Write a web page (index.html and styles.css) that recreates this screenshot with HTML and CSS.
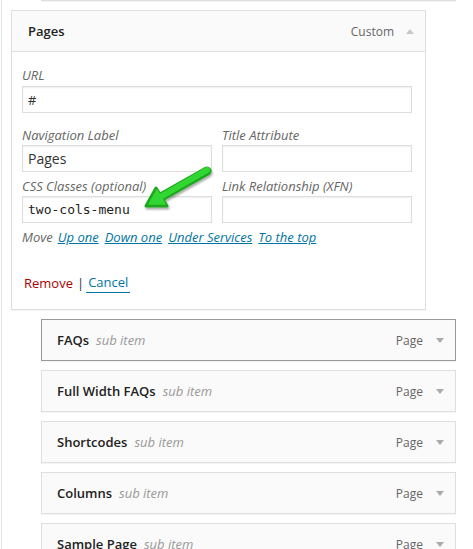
FILE: index.html
```html
<!DOCTYPE html>
<html>
<head>
<meta charset="utf-8">
<link rel="stylesheet" href="styles.css">
</head>
<body>
<div class="page">
  <div class="prev-edge"></div>

  <div class="card">
    <div class="card-head">
      <span class="item-title">Pages</span>
      <span class="item-controls"><span class="item-type">Custom</span><span class="tri tri-up"></span></span>
    </div>
    <div class="card-body">
      <div class="field">
        <label class="lbl">URL</label>
        <div class="input"><span class="val">#</span></div>
      </div>
      <div class="row">
        <div class="field">
          <label class="lbl">Navigation Label</label>
          <div class="input"><span class="val big">Pages</span></div>
        </div>
        <div class="field">
          <label class="lbl">Title Attribute</label>
          <div class="input"></div>
        </div>
      </div>
      <div class="row row2">
        <div class="field">
          <label class="lbl">CSS Classes (optional)</label>
          <div class="input"><span class="val mono">two-cols-menu</span></div>
        </div>
        <div class="field">
          <label class="lbl">Link Relationship (XFN)</label>
          <div class="input"></div>
        </div>
      </div>
      <div class="move">
        <span class="move-lbl">Move</span>
        <a class="lnk">Up one</a>
        <a class="lnk">Down one</a>
        <a class="lnk">Under Services</a>
        <a class="lnk">To the top</a>
      </div>
      <div class="actions">
        <a class="remove">Remove</a><span class="sep">|</span><a class="cancel">Cancel</a>
      </div>
    </div>
  </div>

  <div class="item active">
    <span class="item-name"><span class="item-title">FAQs</span><span class="sub">sub item</span></span>
    <span class="item-controls"><span class="item-type">Page</span><span class="tri tri-down"></span></span>
  </div>
  <div class="item">
    <span class="item-name"><span class="item-title">Full Width FAQs</span><span class="sub">sub item</span></span>
    <span class="item-controls"><span class="item-type">Page</span><span class="tri tri-down"></span></span>
  </div>
  <div class="item">
    <span class="item-name"><span class="item-title">Shortcodes</span><span class="sub">sub item</span></span>
    <span class="item-controls"><span class="item-type">Page</span><span class="tri tri-down"></span></span>
  </div>
  <div class="item">
    <span class="item-name"><span class="item-title">Columns</span><span class="sub">sub item</span></span>
    <span class="item-controls"><span class="item-type">Page</span><span class="tri tri-down"></span></span>
  </div>
  <div class="item">
    <span class="item-name"><span class="item-title">Sample Page</span><span class="sub">sub item</span></span>
    <span class="item-controls"><span class="item-type">Page</span><span class="tri tri-down"></span></span>
  </div>
</div>

<svg class="arrow" width="473" height="549" viewBox="0 0 473 549">
  <defs>
    <filter id="sh" x="-20%" y="-20%" width="140%" height="140%">
      <feGaussianBlur in="SourceAlpha" stdDeviation="1.2"/>
      <feOffset dx="0.5" dy="1.5" result="b"/>
      <feComponentTransfer><feFuncA type="linear" slope="0.35"/></feComponentTransfer>
      <feMerge><feMergeNode/><feMergeNode in="SourceGraphic"/></feMerge>
    </filter>
  </defs>
  <g filter="url(#sh)">
    <line x1="207" y1="171" x2="161" y2="197" stroke="#1fa81f" stroke-width="9" stroke-linecap="round"/>
    <polygon points="146,206 156,188 167,206" fill="#1fa81f" stroke="#1fa81f" stroke-width="3" stroke-linejoin="round"/>
    <line x1="207" y1="170" x2="162" y2="196" stroke="#33d633" stroke-width="6" stroke-linecap="round"/>
    <polygon points="149,204 157,190 165,204" fill="#33d633" stroke="#33d633" stroke-width="1.5" stroke-linejoin="round"/>
  </g>
</svg>
</body>
</html>
```

FILE: styles.css
```css
html, body {
  margin: 0;
  padding: 0;
  background: #fff;
}
body {
  position: relative;
  width: 473px;
  height: 549px;
  overflow: hidden;
  font-family: "Open Sans", "Liberation Sans", sans-serif;
  font-size: 13px;
  color: #333;
}
.page {
  margin-left: 1px;
  border-left: 1px solid #e5e5e5;
  padding-left: 9px;
  min-height: 549px;
}
.prev-edge {
  margin-left: 30px;
  width: 415px;
  height: 1px;
  background: #dfdfdf;
  box-shadow: 0 1px 1px rgba(0,0,0,.04);
}
.card {
  margin-top: 9px;
  width: 413px;
  border: 1px solid #dfdfdf;
  box-shadow: 0 1px 1px rgba(0,0,0,.04);
  background: #fff;
}
.card-head {
  height: 40px;
  border-bottom: 1px solid #dfdfdf;
  background: #fafafa;
  display: flex;
  align-items: center;
  justify-content: space-between;
  padding: 0 11px 0 16px;
}
.item-title {
  font-weight: 600;
  color: #222;
  font-size: 13px;
}
.item-controls {
  display: flex;
  align-items: center;
}
.item-type {
  font-size: 12px;
  color: #666;
}
.tri {
  width: 0;
  height: 0;
  margin-left: 12px;
  border-left: 4px solid transparent;
  border-right: 4px solid transparent;
}
.tri-up {
  border-bottom: 5px solid #c8c8c8;
}
.tri-down {
  border-top: 5px solid #aaa;
  margin-left: 13px;
}
.card-body {
  padding: 14px 13px 0 10px;
  height: 243px;
}
.field {
  display: flex;
  flex-direction: column;
}
.lbl {
  font-style: italic;
  color: #666;
  line-height: 18px;
  height: 18px;
  margin-bottom: 2px;
}
.row .lbl {
  margin-bottom: 1px;
}
.input {
  box-sizing: border-box;
  height: 27px;
  border: 1px solid #ddd;
  box-shadow: inset 0 1px 2px rgba(0,0,0,.07);
  background: #fff;
  display: flex;
  align-items: center;
  padding-left: 5px;
}
.val {
  color: #333;
  font-size: 13px;
}
.val.big {
  font-size: 14px;
}
.val.mono {
  font-family: "DejaVu Sans Mono", "Liberation Mono", monospace;
  font-size: 13px;
  color: #222;
}
.card-body > .field {
  width: 390px;
}
.row {
  display: grid;
  grid-template-columns: 190px 190px;
  column-gap: 10px;
  margin-top: 13px;
}
.row2 {
  margin-top: 5px;
}
.move {
  margin-top: 5px;
  line-height: 18px;
  font-style: italic;
  color: #666;
  display: flex;
  gap: 5px;
}
.move .lnk + .lnk {
  margin-left: 1px;
}
.lnk {
  color: #0074a2;
  text-decoration: underline;
}
.actions {
  margin-top: 27px;
  line-height: 18px;
  padding-left: 2px;
  display: flex;
  align-items: center;
}
.remove {
  color: #a00;
}
.sep {
  color: #333;
  margin: 0 2px 0 4px;
}
.cancel {
  color: #0074a2;
  text-decoration: none;
  border-bottom: 1px solid #0074a2;
  padding: 0 2px 1px;
}
.item {
  margin-top: 9px;
  margin-left: 30px;
  height: 40px;
  border: 1px solid #dfdfdf;
  background: #fafafa;
  box-shadow: 0 1px 1px rgba(0,0,0,.04);
  display: flex;
  align-items: center;
  justify-content: space-between;
  padding: 0 11px 0 15px;
  box-sizing: content-box;
  width: 387px;
}
.item.active {
  border-color: #999;
}
.sub {
  font-style: italic;
  color: #999;
  margin-left: 7px;
}
.arrow {
  position: absolute;
  left: 0;
  top: 0;
  pointer-events: none;
}
```
